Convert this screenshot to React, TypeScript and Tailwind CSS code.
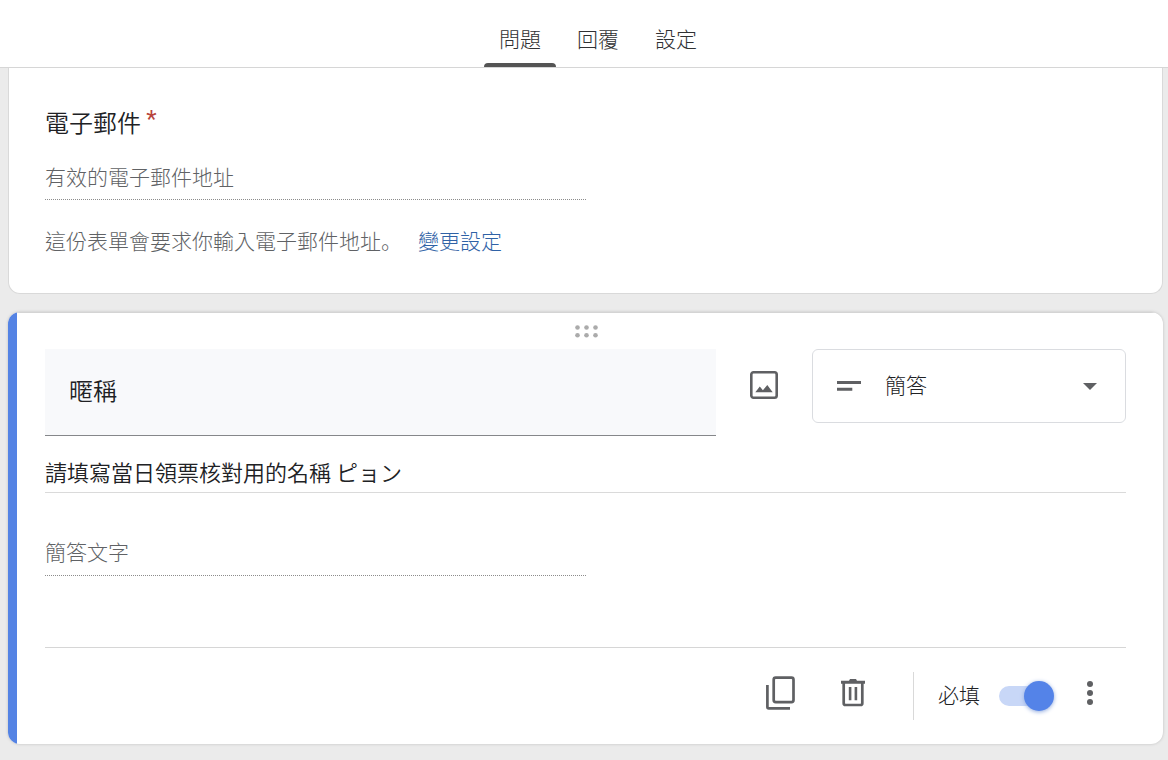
import React, { useState } from "react";

enum FormTab {
    Questions,
    Responses,
    Settings
}

const tabs = [
    { id: FormTab.Questions, label: "問題" },
    { id: FormTab.Responses, label: "回覆" },
    { id: FormTab.Settings, label: "設定" }
];

function ImageIcon() {
    return (
        <svg width="28" height="28" viewBox="0 0 28 28" fill="none" aria-hidden="true">
            <rect x="1.3" y="1.3" width="25.4" height="25.4" rx="2.2" stroke="#5f6063" strokeWidth="2.6" />
            <path d="M5.3 21.3 9.8 15.6l3.1 3.6 4.4-5.2L22.7 21.3z" fill="#5f6063" />
        </svg>
    );
}

function ShortTextIcon() {
    return (
        <svg width="24" height="10" viewBox="0 0 24 10" fill="#5f6063" className="shrink-0" aria-hidden="true">
            <path d="M0 0h24v3H0zM0 6.7h15.3v3H0z" />
        </svg>
    );
}

function CopyIcon() {
    return (
        <svg width="29" height="34" viewBox="0 0 29 34" fill="none" stroke="#5f6063" strokeWidth="2.7" aria-hidden="true">
            <rect x="7.7" y="1.7" width="19.8" height="24.4" rx="2" />
            <path d="M1.4 9v22q0 1.4 1.4 1.4H24" />
        </svg>
    );
}

function TrashIcon() {
    return (
        <svg width="24" height="28" viewBox="0 0 24 28" fill="none" aria-hidden="true">
            <path d="M0 1.7h8L9 0h6l1 1.7h8v3H0z" fill="#5f6063" />
            <path d="M2.7 4v20.2q0 1.8 1.8 1.8h15q1.8 0 1.8-1.8V4" stroke="#5f6063" strokeWidth="2.7" />
            <path d="M7.8 8h2.6v13.3H7.8zM13.6 8h2.6v13.3h-2.6z" fill="#5f6063" />
        </svg>
    );
}

function MoreIcon() {
    return (
        <svg width="8" height="24" viewBox="0 0 8 24" fill="#5f6063" aria-hidden="true">
            <circle cx="4" cy="3" r="3" />
            <circle cx="4" cy="12" r="3" />
            <circle cx="4" cy="21" r="3" />
        </svg>
    );
}

function DragIcon() {
    return (
        <svg width="24" height="13" viewBox="0 0 24 13" fill="#ababab" aria-hidden="true">
            {[3.5, 12.5, 21.5].map((x) => (
                <React.Fragment key={x}>
                    <circle cx={x} cy="2.5" r="2.3" />
                    <circle cx={x} cy="10.2" r="2.3" />
                </React.Fragment>
            ))}
        </svg>
    );
}

function FormTabs() {
    const [activeTab, setActiveTab] = useState(FormTab.Questions);

    return (
        <header className="border-b border-[#d6d6d6] bg-white">
            <div role="tablist" className="flex justify-center gap-[6px] pt-[15px] pl-7">
                {tabs.map((tab) => (
                    <button
                        key={tab.id}
                        type="button"
                        role="tab"
                        aria-selected={activeTab == tab.id}
                        className="w-[72px] text-[21px] text-[#303133]"
                        onClick={() => setActiveTab(tab.id)}
                    >
                        <span className="block pb-[2px] leading-[46px]">{tab.label}</span>
                        <span className={activeTab == tab.id ? "block h-1 rounded-t bg-[#545454]" : "block h-1"}></span>
                    </button>
                ))}
            </div>
        </header>
    );
}

function EmailCard() {
    return (
        <section className="rounded-b-xl border border-t-0 border-[#d9d9d9] bg-white px-9 pt-[34px] pb-[35px]">
            <label htmlFor="email" className="block text-2xl leading-10 font-[350] text-[#202124]">
                電子郵件 <span className="inline-block align-top font-['Roboto',sans-serif] leading-[34px] font-normal text-[#b8443c]">*</span>
            </label>
            <input
                id="email"
                type="email"
                placeholder="有效的電子郵件地址"
                className="mt-[14px] block h-11 w-1/2 border-b border-dotted border-[#8c8c8c] pb-1 text-[21px] outline-none placeholder:text-[#606265]"
            />
            <p className="mt-[22px] text-[21px] leading-9 text-[#606265]">
                這份表單會要求你輸入電子郵件地址
                <span lang="ja" className="font-['Noto_Sans_CJK_JP',sans-serif]">。</span>
                <a href="#settings" className="ml-4 text-[#2f62a6]">變更設定</a>
            </p>
        </section>
    );
}

function QuestionCard() {
    const [title, setTitle] = useState("暱稱");
    const [description, setDescription] = useState("請填寫當日領票核對用的名稱 ピョン");
    const [required, setRequired] = useState(true);

    return (
        <section className="mt-[18px] flex overflow-hidden rounded-xl bg-white shadow-[0_0_3px_#bdbdbd]">
            <div className="w-[9px] shrink-0 bg-[#5483e4]"></div>
            <div className="min-w-0 flex-1 border-t border-[#d4d4d4] pr-[37px] pl-7">
                <div className="flex h-9 items-center justify-center">
                    <button type="button" aria-label="移動">
                        <DragIcon />
                    </button>
                </div>

                <div className="flex items-start">
                    <input
                        aria-label="問題"
                        value={title}
                        onChange={(e) => setTitle(e.target.value)}
                        className="h-[87px] min-w-0 flex-1 border-b border-[#85878a] bg-[#f8f9fb] px-6 pb-[6px] text-2xl font-[350] text-[#202124] outline-none"
                    />
                    <button type="button" aria-label="新增圖片" className="flex h-[72px] w-24 items-center justify-center">
                        <ImageIcon />
                    </button>
                    <div className="flex h-[74px] w-[314px] items-center rounded-md border border-[#dadce0] px-6">
                        <ShortTextIcon />
                        <select
                            aria-label="問題類型"
                            className="h-full min-w-0 flex-1 appearance-none bg-transparent pb-[2px] pl-6 text-[21px] text-[#202124] outline-none"
                        >
                            <option>簡答</option>
                        </select>
                        <svg width="22" height="8" viewBox="0 0 22 8" fill="#5f6063" className="shrink-0" aria-hidden="true">
                            <path d="M4 1h14l-7 7z" />
                        </svg>
                    </div>
                </div>

                <input
                    aria-label="說明"
                    value={description}
                    onChange={(e) => setDescription(e.target.value)}
                    className="mt-4 block h-[41px] w-full border-b border-[#dadada] pb-[2px] text-[22px] font-[350] text-[#202124] outline-none"
                />
                <input
                    aria-label="簡答文字"
                    placeholder="簡答文字"
                    className="mt-9 block h-[47px] w-1/2 border-b border-dotted border-[#8c8c8c] pb-[2px] text-[21px] outline-none placeholder:text-[#606265]"
                />

                <div className="mt-[71px] flex items-center justify-end border-t border-[#d6d6d6] py-6">
                    <button type="button" aria-label="複製" className="flex h-[42px] items-center self-start">
                        <CopyIcon />
                    </button>
                    <button type="button" aria-label="刪除" className="ml-[46px] flex h-[42px] items-center self-start">
                        <TrashIcon />
                    </button>
                    <div className="ml-12 h-12 w-px bg-[#d9d9d9]"></div>
                    <label className="ml-6 flex items-center text-[21px] text-[#202124]">
                        <span className="pb-[2px]">必填</span>
                        <span className="relative ml-[19px] block h-5 w-[56px]">
                            <input
                                type="checkbox"
                                role="switch"
                                checked={required}
                                onChange={() => setRequired(!required)}
                                className="peer block h-5 w-[50px] appearance-none rounded-full bg-[#d5d5d5] checked:bg-[#c8d7f7]"
                            />
                            <span className="absolute -top-[5px] left-0 h-[30px] w-[30px] rounded-full bg-white shadow-[0_1px_4px_#8fa9de] peer-checked:left-[25px] peer-checked:bg-[#5483e8]"></span>
                        </span>
                    </label>
                    <button type="button" aria-label="更多選項" className="mr-8 ml-[31px] flex h-[42px] items-center self-start">
                        <MoreIcon />
                    </button>
                </div>
            </div>
        </section>
    );
}

export default function App() {
    return (
        <div lang="zh-Hant" className="min-h-screen bg-[#ebebeb] font-['Noto_Sans_CJK_TC',sans-serif] font-light">
            <FormTabs />
            <main className="pr-[5px] pb-4 pl-2">
                <EmailCard />
                <QuestionCard />
            </main>
        </div>
    );
}
